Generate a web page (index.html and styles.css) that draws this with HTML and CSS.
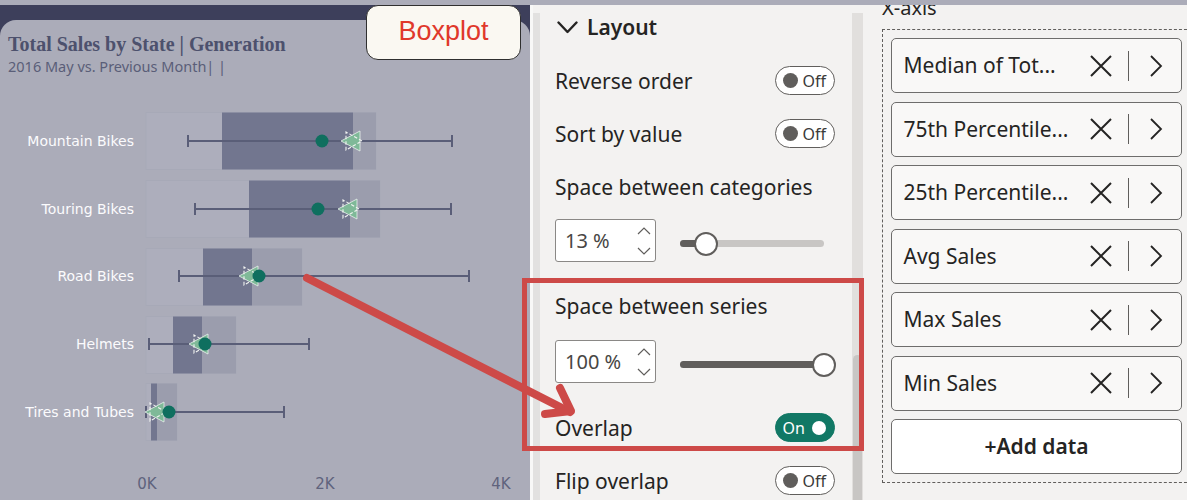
FILE: index.html
```html
<!DOCTYPE html>
<html lang="en">
<head>
<meta charset="utf-8">
<title>Boxplot layout</title>
<link rel="stylesheet" href="styles.css">
</head>
<body>
<div class="main">
  <section class="chart">
    <div class="card">
      <header class="chart-head">
        <div class="chart-title">Total Sales by State | Generation</div>
        <div class="chart-sub">2016 May vs. Previous Month| |</div>
      </header>
      <svg class="plot" width="530" height="400" viewBox="0 100 530 400">
        <defs>
          <g id="star">
            <polygon points="-11,0 8,-10 8,10" fill="#7fb998" stroke="#e9f1ec" stroke-width="0.8"/>
            <polygon points="10,0 -6,-9 -6,9" fill="none" stroke="#f2f4f2" stroke-width="1.1" stroke-dasharray="3.5 2"/>
          </g>
        </defs>
        <g class="cats">
          <text x="134" y="146">Mountain Bikes</text>
          <text x="134" y="214">Touring Bikes</text>
          <text x="134" y="281">Road Bikes</text>
          <text x="134" y="349">Helmets</text>
          <text x="134" y="417">Tires and Tubes</text>
        </g>
        <!-- Mountain Bikes -->
        <rect class="faint" x="146" y="112.5" width="230" height="57"/>
        <rect class="mid-box" x="353" y="112.5" width="23" height="57"/>
        <rect class="dark" x="222" y="112.5" width="131" height="57"/>
        <path class="wh" d="M188 141H452M188 135V147M452 135V147"/>
        <use href="#star" x="352" y="141"/>
        <circle class="dot" cx="322" cy="141" r="6.5"/>
        <!-- Touring Bikes -->
        <rect class="faint" x="146" y="180.5" width="234" height="57"/>
        <rect class="mid-box" x="350" y="180.5" width="30" height="57"/>
        <rect class="dark" x="249" y="180.5" width="101" height="57"/>
        <path class="wh" d="M195 209H451M195 203V215M451 203V215"/>
        <use href="#star" x="349" y="209"/>
        <circle class="dot" cx="318" cy="209" r="6.5"/>
        <!-- Road Bikes -->
        <rect class="faint" x="146" y="248.5" width="156" height="57"/>
        <rect class="mid-box" x="252" y="248.5" width="50" height="57"/>
        <rect class="dark" x="203" y="248.5" width="49" height="57"/>
        <path class="wh" d="M179 276H469M179 270V282M469 270V282"/>
        <use href="#star" x="250" y="276"/>
        <circle class="dot" cx="259" cy="276" r="6.5"/>
        <!-- Helmets -->
        <rect class="faint" x="146" y="316.5" width="90" height="57"/>
        <rect class="mid-box" x="202" y="316.5" width="34" height="57"/>
        <rect class="dark" x="173" y="316.5" width="29" height="57"/>
        <path class="wh" d="M149 344H309M149 338V350M309 338V350"/>
        <use href="#star" x="200" y="344"/>
        <circle class="dot" cx="205" cy="344" r="6.5"/>
        <!-- Tires and Tubes -->
        <rect class="faint" x="146" y="383.5" width="31" height="57"/>
        <rect class="mid-box" x="157" y="383.5" width="20" height="57"/>
        <rect class="dark" x="151" y="383.5" width="6" height="57"/>
        <path class="wh" d="M146 412H284M146 406V418M284 406V418"/>
        <use href="#star" x="156" y="412"/>
        <circle class="dot" cx="169" cy="412" r="6.5"/>
        <g class="ticks">
          <text x="147" y="489">0K</text>
          <text x="325" y="489">2K</text>
          <text x="501" y="489">4K</text>
        </g>
      </svg>
    </div>
    <div class="boxplot-btn">Boxplot</div>
  </section>

  <section class="mid">
    <div class="gutter"><div class="gutter-bar"></div></div>
    <div class="mid-content">
      <div class="layout-head">
        <svg class="chev-down" width="21" height="13" viewBox="0 0 21 13"><path d="M1.5 1.5L10.5 11L19.5 1.5" fill="none" stroke="#252423" stroke-width="2.4" stroke-linecap="round" stroke-linejoin="round"/></svg>
        <span>Layout</span>
      </div>
      <div class="row"><span>Reverse order</span><div class="toggle off"><span class="knob"></span><span>Off</span></div></div>
      <div class="row"><span>Sort by value</span><div class="toggle off"><span class="knob"></span><span>Off</span></div></div>
      <div class="row"><span>Space between categories</span></div>
      <div class="spin-row">
        <div class="spin"><span>13 %</span>
          <svg class="arrows" width="14" height="30" viewBox="0 0 14 30"><path d="M1 8L7 2L13 8M1 22L7 28L13 22" fill="none" stroke="#605e5c" stroke-width="1.2"/></svg>
        </div>
        <div class="slider"><div class="fill" style="width:22px"></div><div class="thumb" style="left:14px"></div></div>
      </div>
      <div class="row gap-top"><span>Space between series</span></div>
      <div class="spin-row second">
        <div class="spin"><span>100 %</span>
          <svg class="arrows" width="14" height="30" viewBox="0 0 14 30"><path d="M1 8L7 2L13 8M1 22L7 28L13 22" fill="none" stroke="#605e5c" stroke-width="1.2"/></svg>
        </div>
        <div class="slider"><div class="fill" style="width:144px"></div><div class="thumb" style="left:132px"></div></div>
      </div>
      <div class="row overlap"><span>Overlap</span><div class="toggle on"><span>On</span><span class="knob"></span></div></div>
      <div class="row last"><span>Flip overlap</span><div class="toggle off"><span class="knob"></span><span>Off</span></div></div>
    </div>
    <div class="scroll"><div class="track"><div class="sthumb"></div></div></div>
  </section>

  <section class="fields">
    <div class="axis-title">X-axis</div>
    <div class="dropzone">
      <div class="item"><span class="label">Median of Tot...</span><svg class="xicon" width="24" height="24" viewBox="0 0 24 24"><path d="M2 2L22 22M22 2L2 22" stroke="#252423" stroke-width="2"/></svg><span class="sep"></span><svg class="chev" width="14" height="24" viewBox="0 0 14 24"><path d="M2 2L12 12L2 22" fill="none" stroke="#252423" stroke-width="1.8"/></svg></div>
      <div class="item"><span class="label">75th Percentile...</span><svg class="xicon" width="24" height="24" viewBox="0 0 24 24"><path d="M2 2L22 22M22 2L2 22" stroke="#252423" stroke-width="2"/></svg><span class="sep"></span><svg class="chev" width="14" height="24" viewBox="0 0 14 24"><path d="M2 2L12 12L2 22" fill="none" stroke="#252423" stroke-width="1.8"/></svg></div>
      <div class="item"><span class="label">25th Percentile...</span><svg class="xicon" width="24" height="24" viewBox="0 0 24 24"><path d="M2 2L22 22M22 2L2 22" stroke="#252423" stroke-width="2"/></svg><span class="sep"></span><svg class="chev" width="14" height="24" viewBox="0 0 14 24"><path d="M2 2L12 12L2 22" fill="none" stroke="#252423" stroke-width="1.8"/></svg></div>
      <div class="item"><span class="label">Avg Sales</span><svg class="xicon" width="24" height="24" viewBox="0 0 24 24"><path d="M2 2L22 22M22 2L2 22" stroke="#252423" stroke-width="2"/></svg><span class="sep"></span><svg class="chev" width="14" height="24" viewBox="0 0 14 24"><path d="M2 2L12 12L2 22" fill="none" stroke="#252423" stroke-width="1.8"/></svg></div>
      <div class="item"><span class="label">Max Sales</span><svg class="xicon" width="24" height="24" viewBox="0 0 24 24"><path d="M2 2L22 22M22 2L2 22" stroke="#252423" stroke-width="2"/></svg><span class="sep"></span><svg class="chev" width="14" height="24" viewBox="0 0 14 24"><path d="M2 2L12 12L2 22" fill="none" stroke="#252423" stroke-width="1.8"/></svg></div>
      <div class="item"><span class="label">Min Sales</span><svg class="xicon" width="24" height="24" viewBox="0 0 24 24"><path d="M2 2L22 22M22 2L2 22" stroke="#252423" stroke-width="2"/></svg><span class="sep"></span><svg class="chev" width="14" height="24" viewBox="0 0 14 24"><path d="M2 2L12 12L2 22" fill="none" stroke="#252423" stroke-width="1.8"/></svg></div>
      <div class="item add">+Add data</div>
    </div>
  </section>
</div>

<svg class="overlay" width="1187" height="500" viewBox="0 0 1187 500">
  <rect x="524.5" y="280.5" width="337" height="168" fill="none" stroke="#cd4a48" stroke-width="5"/>
  <path d="M307 278L570 412" stroke="#cd4a48" stroke-width="8" stroke-linecap="round" fill="none"/>
  <path d="M545 414L571 411L560 388" stroke="#cd4a48" stroke-width="8" stroke-linecap="round" stroke-linejoin="round" fill="none"/>
</svg>
</body>
</html>
```

FILE: styles.css
```css
* { box-sizing: border-box; }
html, body { margin: 0; }
body {
  width: 1187px;
  height: 500px;
  overflow: hidden;
  background: #abacb9;
  font-family: "Noto Sans", "Open Sans", sans-serif;
  color: #252423;
  position: relative;
  padding-top: 5px;
}
.main { display: flex; height: 495px; overflow: hidden; }

/* chart */
.chart {
  width: 530px;
  flex: none;
  background: #3d3f5b;
  padding-top: 15px;
  position: relative;
}
.card {
  height: 480px;
  background: #abacb9;
  border-radius: 16px 16px 0 0;
}
.chart-head { height: 80px; padding: 12px 0 0 8px; }
.chart-title {
  font-family: "Liberation Serif", serif;
  font-weight: bold;
  font-size: 20px;
  line-height: 24px;
  color: #4d516d;
}
.chart-sub {
  font-size: 14.5px;
  line-height: 18px;
  margin-top: 1px;
  color: #5a5e78;
}
.plot { display: block; }
.cats text {
  font-family: "DejaVu Sans", sans-serif;
  font-size: 14px;
  fill: #fbfbfd;
  text-anchor: end;
}
.ticks text {
  font-family: "DejaVu Sans", sans-serif;
  font-size: 15px;
  fill: #5f637d;
  text-anchor: middle;
}
.faint { fill: #adaebc; stroke: #a7a9b7; stroke-width: 1; }
.dark { fill: #72768f; }
.mid-box { fill: #9b9dad; }
.wh { stroke: #5a5e78; stroke-width: 2; fill: none; }
.dot { fill: #0f6f5f; }

.boxplot-btn {
  position: absolute;
  left: 366px;
  top: 0;
  width: 155px;
  height: 55px;
  border: 1.5px solid #2f2f2f;
  border-radius: 12px;
  background: #faf8f2;
  color: #e0382b;
  font-family: "Liberation Sans", Arial, sans-serif;
  font-size: 27px;
  display: flex;
  align-items: center;
  justify-content: center;
  padding-bottom: 2px;
}

/* middle panel */
.mid {
  width: 334px;
  flex: none;
  display: flex;
  background: #f3f2f1;
}
.gutter {
  width: 10px;
  border-left: 3px solid #f8f8f7;
  padding-top: 8px;
}
.gutter-bar { height: 100%; background: #e2e1e0; }
.mid-content {
  width: 310px;
  padding: 0 15px;
  font-size: 21px;
  overflow: hidden;
}
.layout-head {
  height: 44px;
  display: flex;
  align-items: center;
  gap: 9px;
  font-weight: 600;
  margin-bottom: 5px;
  padding-left: 2px;
}
.chev-down { display: block; }
.row {
  height: 53px;
  display: flex;
  align-items: center;
  justify-content: space-between;
  white-space: nowrap;
}
.row.gap-top { margin-top: 17px; }
.row.overlap { margin-top: 18px; }
.row.last { height: 46px; padding-top: 7px; }
.spin-row {
  height: 43px;
  margin-top: 6px;
  display: flex;
  align-items: center;
}
.spin-row.second { margin-top: 8px; }
.spin {
  width: 101px;
  height: 43px;
  border: 1px solid #8a8886;
  border-radius: 3px;
  background: #ffffff;
  display: flex;
  align-items: center;
  justify-content: space-between;
  padding: 0 4px 0 9px;
  font-size: 20px;
  color: #484644;
}
.arrows { display: block; }
.slider {
  position: relative;
  width: 144px;
  height: 7px;
  margin-left: 24px;
  margin-top: 6px;
  border-radius: 4px;
  background: #c8c6c4;
}
.slider .fill {
  height: 7px;
  border-radius: 4px;
  background: #605e5c;
}
.slider .thumb {
  position: absolute;
  top: -8.5px;
  width: 24px;
  height: 24px;
  border-radius: 50%;
  border: 2px solid #605e5c;
  background: #ffffff;
}
.toggle {
  width: 60px;
  height: 29px;
  border-radius: 15px;
  border: 1.5px solid #605e5c;
  display: flex;
  align-items: center;
  font-size: 16px;
  flex: none;
}
.toggle.off {
  background: #ffffff;
  color: #3b3a39;
  padding-left: 6.5px;
  gap: 5px;
}
.toggle.off .knob {
  width: 15px;
  height: 15px;
  border-radius: 50%;
  background: #605e5c;
}
.toggle.on {
  background: #117865;
  border-color: #117865;
  color: #ffffff;
  justify-content: space-between;
  padding: 0 8.5px 0 6.5px;
}
.toggle.on .knob {
  width: 14px;
  height: 14px;
  border-radius: 50%;
  background: #ffffff;
}
.scroll {
  width: 14px;
  padding: 8px 1px 0 2px;
}
.track {
  height: 100%;
  background: #e1dfdd;
  padding-top: 342px;
  overflow: hidden;
}
.sthumb {
  height: 200px;
  margin: 0 1px;
  border-radius: 5px 5px 0 0;
  background: #c8c6c4;
}

/* right fields panel */
.fields {
  flex: 1;
  background: #f3f2f1;
  overflow: hidden;
  padding-left: 18px;
}
.axis-title {
  height: 24px;
  line-height: 24px;
  margin-top: -9px;
  font-size: 20px;
  color: #252423;
}
.dropzone {
  margin-top: 9px;
  width: 310px;
  border: 1px dashed #605e5c;
  padding: 8px 9px 8px 8px;
  display: flex;
  flex-direction: column;
  gap: 8.5px;
}
.item {
  height: 55px;
  border: 1.5px solid #6e6d6c;
  border-radius: 5px;
  background: #f9f8f7;
  display: flex;
  align-items: center;
  padding: 0 18px 0 11.5px;
  font-size: 21px;
  white-space: nowrap;
}
.item .label { flex: 1; padding-bottom: 1px; }
.xicon { display: block; flex: none; }
.sep {
  width: 1.5px;
  height: 30px;
  background: #605e5c;
  margin: 0 20px 0 15px;
  flex: none;
}
.chev { display: block; flex: none; }
.item.add {
  background: #ffffff;
  justify-content: center;
  font-weight: 600;
  padding: 0 0 2px 0;
}

.overlay {
  position: absolute;
  left: 0;
  top: 0;
  pointer-events: none;
}
```
